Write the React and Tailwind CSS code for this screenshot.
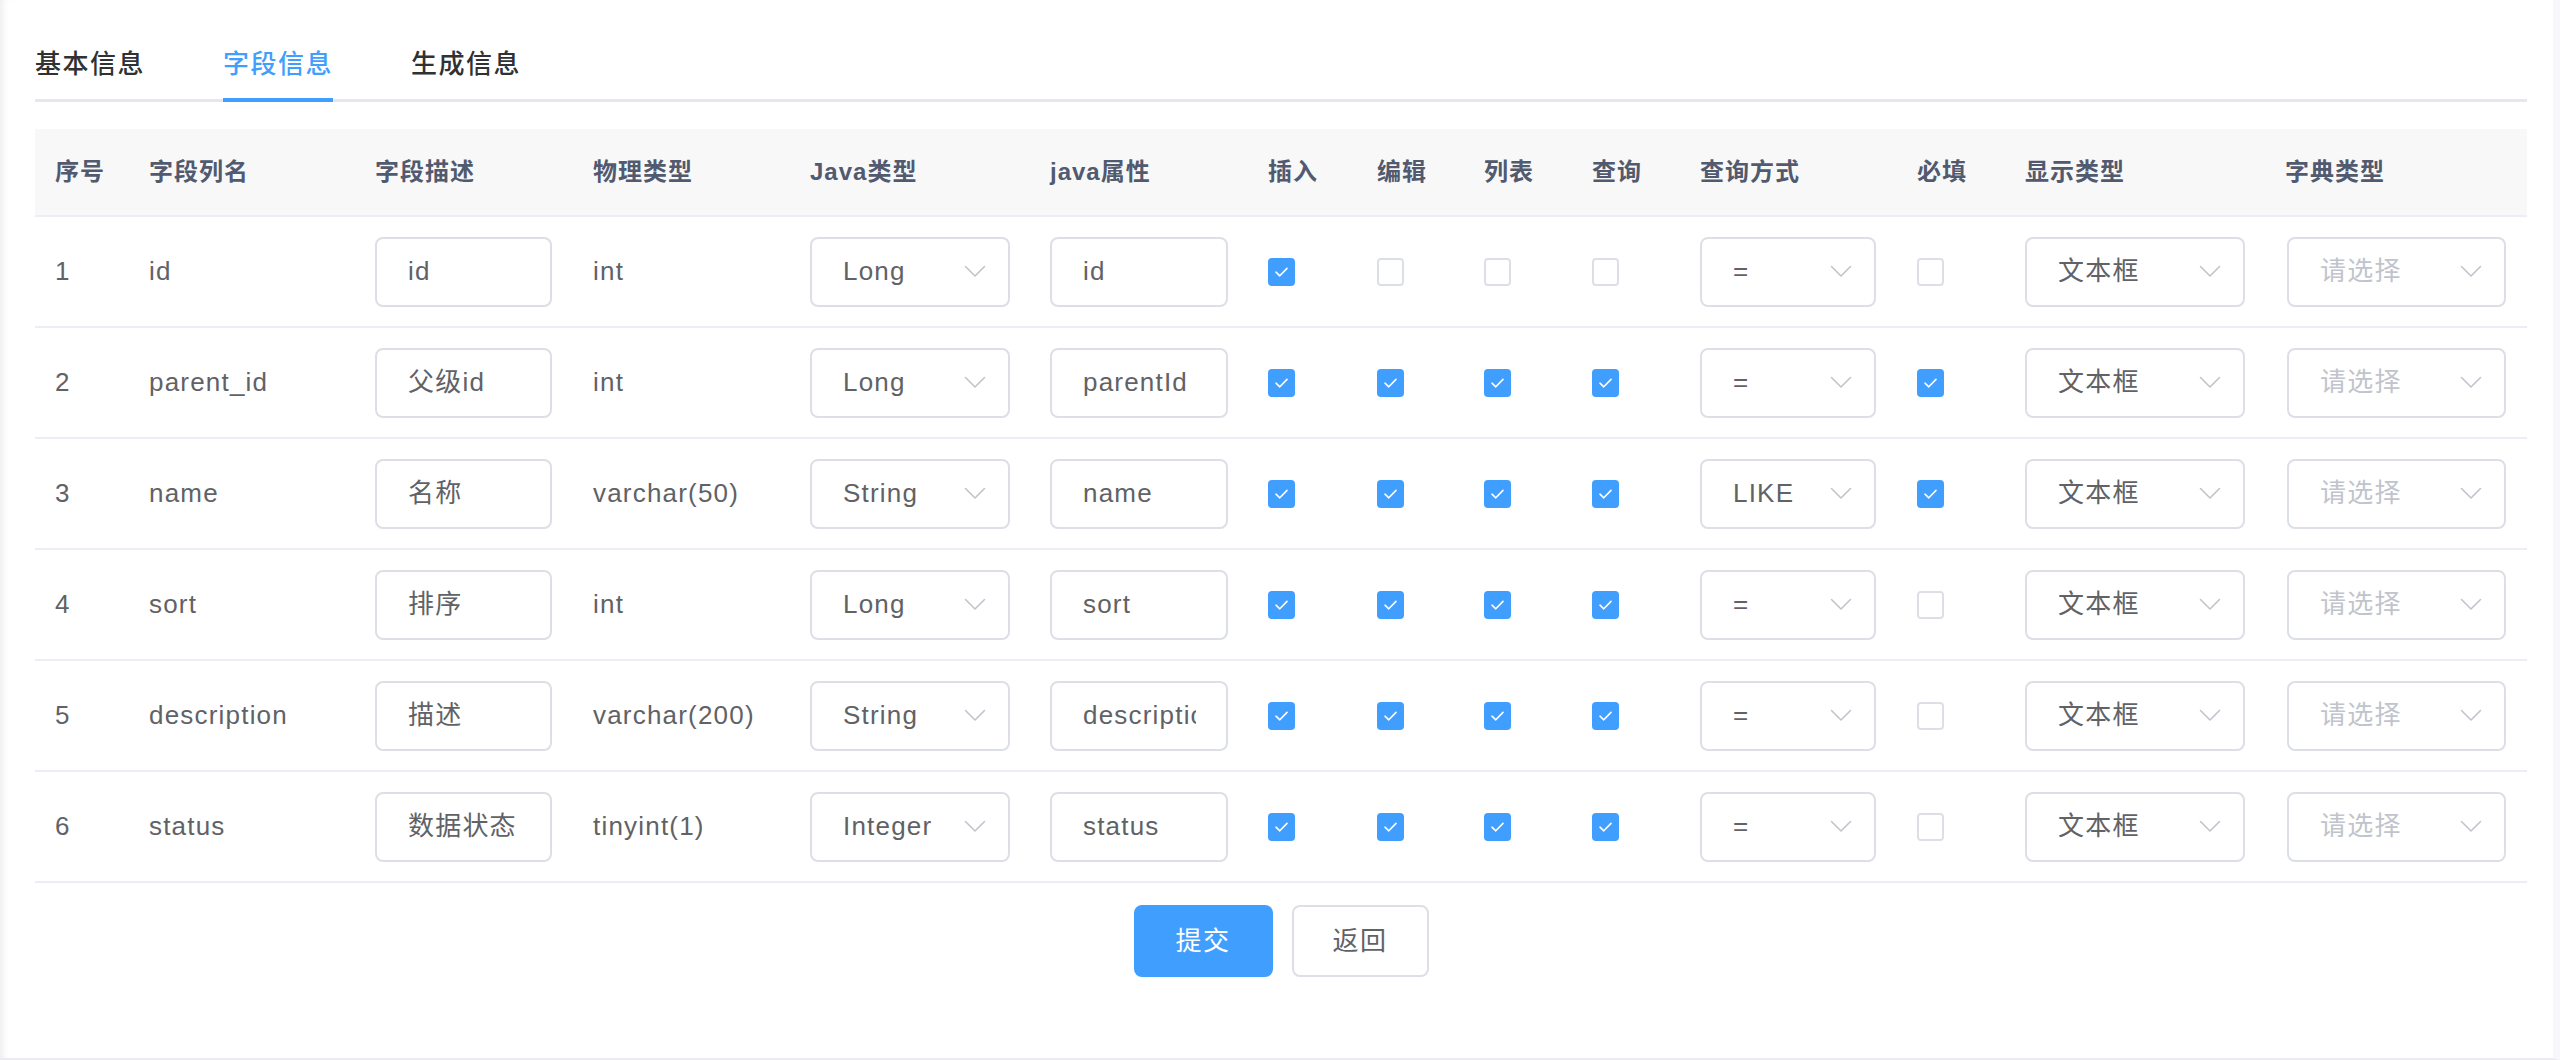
const GRID =
  'grid grid-cols-[94px_226px_218px_217px_240px_218px_109px_107px_108px_108px_217px_108px_261px_261px]'

const rows = [
  { no: 1, column: 'id', desc: 'id', dbType: 'int', javaType: 'Long', javaField: 'id', flags: [true, false, false, false], query: '=', required: false },
  { no: 2, column: 'parent_id', desc: '父级id', dbType: 'int', javaType: 'Long', javaField: 'parentId', flags: [true, true, true, true], query: '=', required: true },
  { no: 3, column: 'name', desc: '名称', dbType: 'varchar(50)', javaType: 'String', javaField: 'name', flags: [true, true, true, true], query: 'LIKE', required: true },
  { no: 4, column: 'sort', desc: '排序', dbType: 'int', javaType: 'Long', javaField: 'sort', flags: [true, true, true, true], query: '=', required: false },
  { no: 5, column: 'description', desc: '描述', dbType: 'varchar(200)', javaType: 'String', javaField: 'description', flags: [true, true, true, true], query: '=', required: false },
  { no: 6, column: 'status', desc: '数据状态', dbType: 'tinyint(1)', javaType: 'Integer', javaField: 'status', flags: [true, true, true, true], query: '=', required: false },
]

const headers = ['序号', '字段列名', '字段描述', '物理类型', 'Java类型', 'java属性', '插入', '编辑', '列表', '查询', '查询方式', '必填', '显示类型', '字典类型']

function Chevron() {
  return (
    <svg width="22" height="13" viewBox="0 0 22 13" fill="none" className="shrink-0">
      <path d="M1.5 1.5 L11 11 L20.5 1.5" stroke="#c0c4cc" strokeWidth="1.6" strokeLinecap="round" strokeLinejoin="round" />
    </svg>
  )
}

function TextBox({ value, width }) {
  return (
    <div className={`${width} h-[70px] flex items-center pl-[31px] pr-[30px] border-2 border-[#dcdfe6] rounded-[8px] bg-white`}>
      <div className="overflow-hidden whitespace-nowrap text-[#606266]">{value}</div>
    </div>
  )
}

function Select({ value, width, placeholder }) {
  return (
    <div className={`${width} h-[70px] flex items-center justify-between pl-[31px] pr-[22px] border-2 border-[#dcdfe6] rounded-[8px] bg-white`}>
      <span className={placeholder ? 'text-[#c0c4cc]' : 'text-[#606266]'}>{value}</span>
      <Chevron />
    </div>
  )
}

function Checkbox({ checked }) {
  if (checked) {
    return (
      <div className="w-[27px] h-[28px] rounded-[4px] bg-[#409eff] flex items-center justify-center">
        <svg width="15" height="12" viewBox="0 0 15 12" fill="none">
          <path d="M2 6.2 L5.8 9.8 L13 2.4" stroke="white" strokeWidth="1.6" strokeLinecap="round" strokeLinejoin="round" />
        </svg>
      </div>
    )
  }
  return <div className="w-[27px] h-[28px] rounded-[4px] border-2 border-[#dcdfe6] bg-white" />
}

function Row({ row }) {
  return (
    <div className={`${GRID} h-[111px] border-b-2 border-[#ebeef5] text-[26px] tracking-[1.2px] text-[#606266]`}>
      <div className="flex items-center pl-[20px]">{row.no}</div>
      <div className="flex items-center pl-[20px]">{row.column}</div>
      <div className="flex items-center pl-[20px]">
        <TextBox value={row.desc} width="w-[177px]" />
      </div>
      <div className="flex items-center pl-[20px]">{row.dbType}</div>
      <div className="flex items-center pl-[20px]">
        <Select value={row.javaType} width="w-[200px]" />
      </div>
      <div className="flex items-center pl-[20px]">
        <TextBox value={row.javaField} width="w-[178px]" />
      </div>
      {row.flags.map((f, i) => (
        <div key={i} className="flex items-center pl-[20px]">
          <Checkbox checked={f} />
        </div>
      ))}
      <div className="flex items-center pl-[20px]">
        <Select value={row.query} width="w-[176px]" />
      </div>
      <div className="flex items-center pl-[20px]">
        <Checkbox checked={row.required} />
      </div>
      <div className="flex items-center pl-[20px]">
        <Select value="文本框" width="w-[220px]" />
      </div>
      <div className="flex items-center pl-[21px]">
        <Select value="请选择" width="w-[219px]" placeholder />
      </div>
    </div>
  )
}

export default function App() {
  const tabs = ['基本信息', '字段信息', '生成信息']
  return (
    <div className="relative w-[2560px] h-[1060px] bg-white border-b-2 border-[#ececf0] border-r-[7px] border-r-[#f8f8fa] shadow-[inset_7px_0_6px_-4px_rgba(0,0,0,0.07)] pl-[35px] pr-[26px] font-['Liberation_Sans','Noto_Sans_CJK_SC',sans-serif]">
      {/* tabs */}
      <div className="flex h-[102px] border-b-[3px] border-[#e4e7ed]">
        {tabs.map((t, i) => (
          <div
            key={t}
            className={`relative flex items-center pt-[30px] text-[26px] tracking-[1.5px] font-medium ${i === 0 ? 'pr-[39px]' : 'px-[39px]'} ${i === 1 ? 'text-[#409eff]' : 'text-[#303133]'}`}
          >
            {t}
            {i === 1 && <div className="absolute left-[39px] right-[39px] -bottom-[3px] h-[4px] bg-[#409eff]" />}
          </div>
        ))}
      </div>

      {/* table */}
      <div className="mt-[27px]">
        <div className={`${GRID} h-[88px] bg-[#f8f8f9] border-b-2 border-[#ebeef5] text-[24px] tracking-[1px] font-bold text-[#515a6e]`}>
          {headers.map((h, i) => (
            <div key={h} className={`flex items-center ${i === 13 ? 'pl-[19px]' : 'pl-[20px]'}`}>
              {h}
            </div>
          ))}
        </div>
        {rows.map((r) => (
          <Row key={r.no} row={r} />
        ))}
      </div>

      {/* actions */}
      <div className="flex justify-center gap-[19px] mt-[22px] text-[26px] tracking-[1.5px]">
        <button className="w-[139px] h-[72px] rounded-[8px] bg-[#409eff] text-white">提交</button>
        <button className="w-[137px] h-[72px] rounded-[8px] border-2 border-[#dcdfe6] bg-white text-[#606266]">返回</button>
      </div>
    </div>
  )
}
